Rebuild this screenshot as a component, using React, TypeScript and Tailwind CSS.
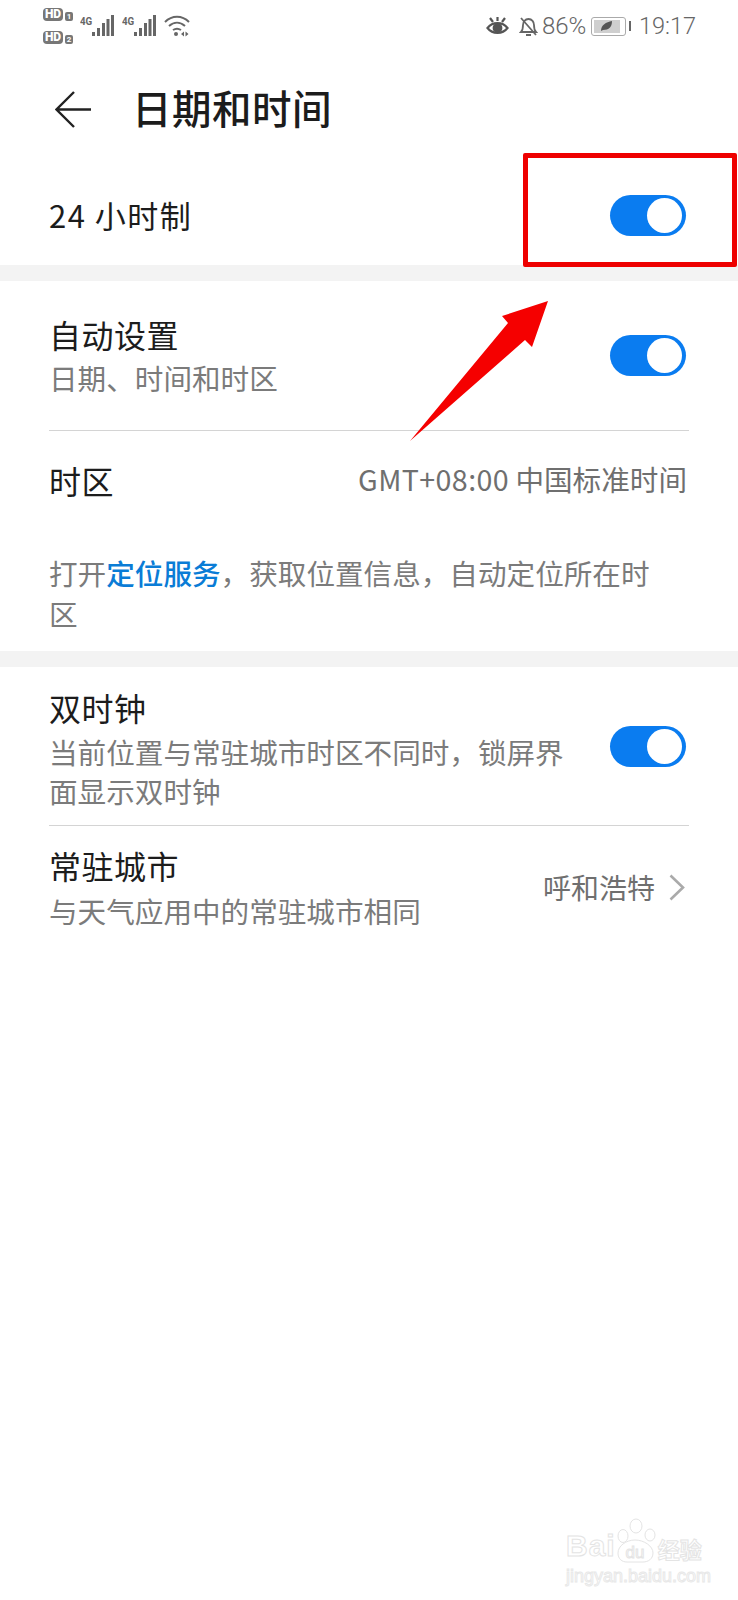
const FONT = "font-['Noto_Sans_CJK_SC','Noto_Sans',sans-serif]";

function Toggle() {
  return (
    <div className="flex h-[41px] w-[76px] shrink-0 items-center justify-end rounded-full bg-[#0a7cf0] pr-[4px]">
      <div className="h-[35px] w-[35px] rounded-full bg-white" />
    </div>
  );
}

function Signal() {
  return (
    <div className="flex items-start">
      <span className="w-[12px] text-[11.500px] font-bold leading-[12px] text-[#666] font-['Roboto',sans-serif] scale-x-[0.85] origin-left">4G</span>
      <svg width="22" height="21" viewBox="0 0 22 21" fill="#666">
        <rect x="0" y="17" width="3" height="4" />
        <rect x="5" y="13" width="3" height="8" />
        <rect x="10" y="8" width="3" height="13" />
        <rect x="14.500" y="4" width="3" height="17" />
        <rect x="19" y="0" width="3" height="21" />
      </svg>
    </div>
  );
}

function HdBadge({ n }: { n: string }) {
  return (
    <div className="flex items-center gap-[2px]">
      <span className="w-[20px] rounded-[4px] bg-[#777] text-center text-[12px] font-black leading-[13px] text-white font-['Roboto',sans-serif]">HD</span>
      <span className="mt-[4px] w-[8px] rounded-[2px] bg-[#777] text-center text-[8px] font-bold leading-[9px] text-white font-['Roboto',sans-serif]">{n}</span>
    </div>
  );
}

function StatusBar() {
  return (
    <div className="flex h-[60px] items-start justify-between pl-[43px] pr-[42px] text-[#666]">
      <div className="flex items-start pt-[8px]">
        <div className="flex w-[37px] flex-col gap-[10px]">
          <HdBadge n="1" />
          <HdBadge n="2" />
        </div>
        <div className="flex gap-[8px] pt-[7px]">
          <Signal />
          <Signal />
          <svg width="26" height="22" viewBox="0 0 26 22" fill="none" stroke="#666" strokeWidth="2">
            <path d="M1 7c7-7 17-7 24 0" />
            <path d="M5 11c5-4.500 11-4.500 16 0" />
            <path d="M9 15c3-2 5-2 8 0" />
            <circle cx="12" cy="19" r="2" fill="#666" stroke="none" />
            <path d="M20 16.500v5l-3-2.500zM21.500 16.500v5l3-2.500z" fill="#666" stroke="none" />
          </svg>
        </div>
      </div>
      <div className="flex items-center pt-[14px] font-['Roboto',sans-serif] text-[24px] font-light leading-[24px]">
        <svg width="23" height="20" viewBox="0 0 23 20" fill="none" stroke="#555" strokeWidth="2.200">
          <path d="M1.500 12c5-6.500 15-6.500 20 0-5 6.500-15 6.500-20 0z" />
          <circle cx="11.500" cy="12" r="3.800" fill="#555" />
          <path d="M4 2l3 4M11.500 1v4M19 2l-3 4" />
        </svg>
        <svg width="19" height="21" viewBox="0 0 19 21" fill="none" stroke="#666" strokeWidth="1.800" className="ml-[10px]">
          <path d="M2 16c2-2 2-4 2-7 0-3 2-6 5.500-6S15 6 15 9c0 3 0 5 2 7z" />
          <path d="M7 19h5M2 2l15 17" />
        </svg>
        <span className="ml-[4px] w-[43px]">86%</span>
        <div className="ml-[6px] flex h-[19px] w-[35px] items-center rounded-[3px] border border-[#aaa] p-[2px]">
          <div className="flex h-full w-[26px] items-center justify-center bg-[#cfcfcf]">
            <svg width="13" height="10" viewBox="0 0 13 10" fill="#555">
              <path d="M1 10c0-6 5-9 11-10 0 6-3 9-9 9z" />
            </svg>
          </div>
        </div>
        <div className="ml-[3px] h-[10px] w-[2px] bg-[#666]" />
        <span className="ml-[8px] text-[23.500px]">19:17</span>
      </div>
    </div>
  );
}

function Title({ children }: { children: string }) {
  return <div className="text-[32px] leading-[42px] tracking-[0.5px] text-[#1c1c1c]">{children}</div>;
}

function Sub({ children, className }: { children: string; className?: string }) {
  return <div className={`text-[28.600px] text-[#7b7b7b] ${className}`}>{children}</div>;
}

function Band() {
  return <div className="h-[16px] bg-[#f3f3f3]" />;
}

function Watermark() {
  return (
    <div className="absolute left-[566px] top-[1518px] w-[140px]">
      <div className="flex h-[46px] items-end">
        <span className="text-[30px] font-bold leading-[36px] tracking-[1px] font-['Liberation_Sans',sans-serif] text-white [-webkit-text-stroke:1px_#e4e4e4]">Bai</span>
        <svg width="40" height="46" viewBox="0 0 40 46" fill="#fff" stroke="#e4e4e4" className="shrink-0">
          <ellipse cx="7" cy="18" rx="5" ry="6.500" />
          <ellipse cx="20" cy="8" rx="6" ry="7" />
          <ellipse cx="34" cy="17" rx="5" ry="6" />
          <path d="M2 35c0-7 8-13 17-13s18 6 18 13c0 6-5 9-10 9H11c-5 0-9-3-9-9z" />
          <text x="19" y="40" textAnchor="middle" fontSize="17" fontFamily="Liberation Sans" fill="#fff" stroke="#e4e4e4">du</text>
        </svg>
        <span className="ml-[2px] whitespace-nowrap text-[22px] font-bold leading-[32px] text-white [-webkit-text-stroke:1px_#e4e4e4]">经验</span>
      </div>
      <div className="mt-[2px] whitespace-nowrap text-[18px] leading-[20px] font-['Liberation_Sans',sans-serif] text-white [-webkit-text-stroke:1px_#e8e8e8]">
        jingyan.baidu.com
      </div>
    </div>
  );
}

export default function App() {
  return (
    <div className={`relative h-[1600px] w-[738px] overflow-hidden bg-white ${FONT}`}>
      <StatusBar />

      <div className="flex h-[98px] items-center pl-[55px]">
        <svg width="37" height="37" viewBox="0 0 37 37" fill="none" stroke="#222" strokeWidth="2.400">
          <path d="M36 18.500H2M19 1L1.500 18.500 19 36" />
        </svg>
        <div className="ml-[40px] -mt-[4px] text-[39.500px] font-medium tracking-[0.5px] text-[#1c1c1c]">日期和时间</div>
      </div>

      <div className="flex h-[107px] items-center justify-between pl-[49px] pr-[52px] pt-[8px]">
        <div className="text-[31px] tracking-[1.500px] text-[#1c1c1c]">24 小时制</div>
        <Toggle />
      </div>

      <Band />

      <div className="pl-[49px] pr-[49px]">
        <div className="flex h-[150px] items-center justify-between border-b border-[#d4d4d4] pr-[3px]">
          <div>
            <Title>自动设置</Title>
            <Sub className="mt-[2px] leading-[41px]">日期、时间和时区</Sub>
          </div>
          <Toggle />
        </div>
        <div className="flex h-[97px] items-center justify-between pr-[2px]">
          <Title>时区</Title>
          <div className="text-[28.600px] text-[#6f6f6f]">
            <span className="tracking-[0.4px]">GMT+08:00</span> 中国标准时间
          </div>
        </div>
        <div className="pr-[20px] pt-[24px] pb-[17px] text-[28.600px] leading-[41px] text-[#7b7b7b]">
          打开<span className="font-medium text-[#0a7cd6]">定位服务</span>，获取位置信息，自动定位所在时区
        </div>
      </div>

      <Band />

      <div className="pl-[49px] pr-[49px]">
        <div className="flex h-[159px] items-center justify-between border-b border-[#d4d4d4] pr-[3px]">
          <div className="mt-[4px] w-[520px]">
            <Title>双时钟</Title>
            <Sub className="mt-[4px] leading-[39px]">当前位置与常驻城市时区不同时，锁屏界面显示双时钟</Sub>
          </div>
          <Toggle />
        </div>
        <div className="flex h-[122px] items-center justify-between pr-[4px]">
          <div>
            <Title>常驻城市</Title>
            <Sub className="mt-[4px] leading-[41px]">与天气应用中的常驻城市相同</Sub>
          </div>
          <div className="flex items-center gap-[14px]">
            <span className="text-[28px] text-[#6f6f6f]">呼和浩特</span>
            <svg width="16" height="27" viewBox="0 0 16 27" fill="none" stroke="#aaa" strokeWidth="2.600">
              <path d="M1.500 1.500L14 13.500 1.500 25.500" />
            </svg>
          </div>
        </div>
      </div>

      <div className="absolute left-[523px] top-[153px] h-[114px] w-[214px] rounded-[2px] border-[5px] border-[#ee0000]" />
      <svg className="absolute left-[400px] top-[295px]" width="160" height="155" viewBox="400 295 160 155" fill="#f50000">
        <polygon points="548,301 502,316 508,323 410,441 525,340 532,347" />
      </svg>
      <Watermark />
    </div>
  );
}
